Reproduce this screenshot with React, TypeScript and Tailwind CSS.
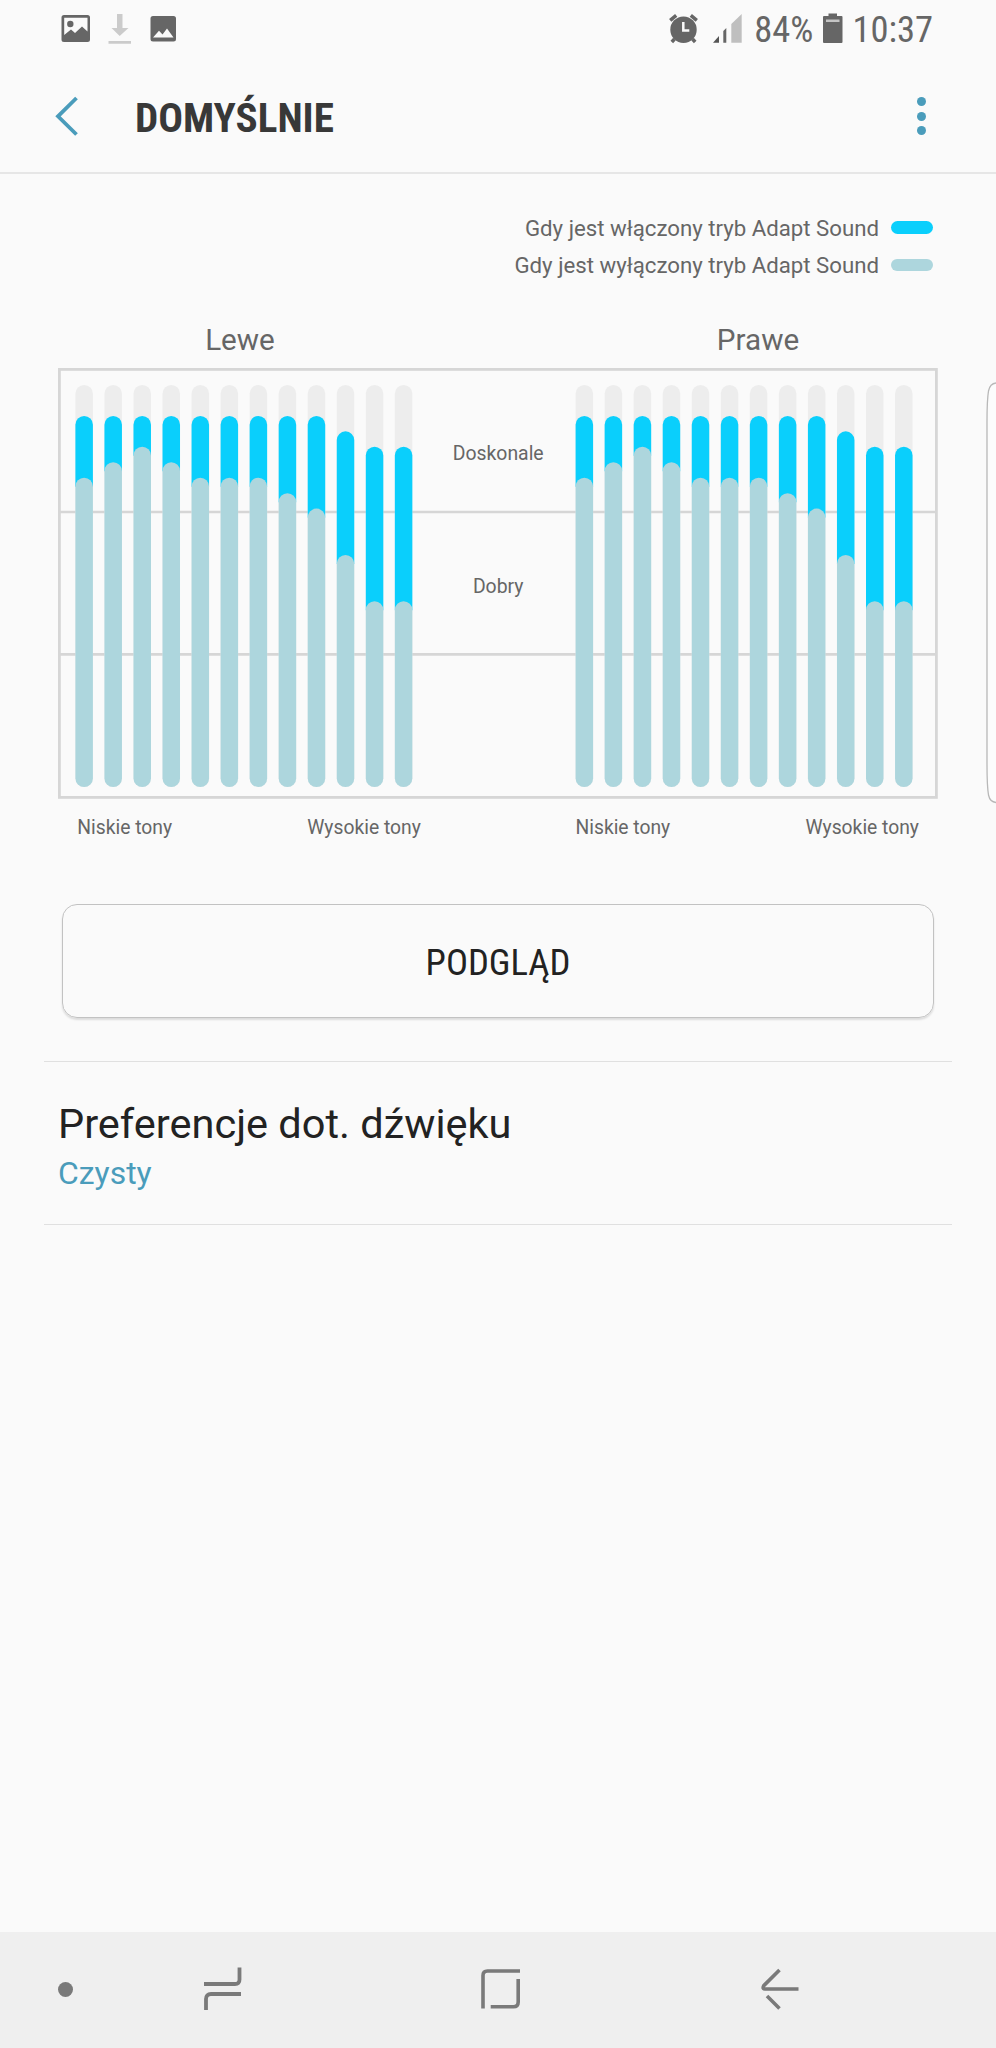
const ADAPTED = [2, 2, 2, 2, 2, 2, 2, 2, 2, 3, 4, 4];
const ORIGINAL = [6, 5, 4, 5, 6, 6, 6, 7, 8, 11, 14, 14];

const BAR_WIDTH = 17.5;
const BAR_PITCH = 29.04;
const BAR_TOP = 17;
const BAR_BOTTOM = 419;
const STEP = 15.45;

function Bars({ x }: { x: number }) {
  const bar = (i: number, level: number, fill: string) => (
    <rect
      x={x + i * BAR_PITCH}
      y={BAR_TOP + level * STEP}
      width={BAR_WIDTH}
      height={BAR_BOTTOM - BAR_TOP - level * STEP}
      rx={BAR_WIDTH / 2}
      fill={fill}
    />
  );
  return (
    <g>
      {ADAPTED.map((level, i) => (
        <g key={i}>
          {bar(i, 0, "#ededed")}
          <path
            d={`M${x + i * BAR_PITCH} ${BAR_TOP + level * STEP + 8.75}a8.75 8.75 0 0 1 17.5 0V${BAR_TOP + ORIGINAL[i] * STEP + 9}h-17.5z`}
            fill="#0acffc"
          />
          {bar(i, ORIGINAL[i], "#add6dd")}
        </g>
      ))}
    </g>
  );
}

function Chart() {
  return (
    <svg width="880" height="431" viewBox="0 0 880 431" className="block">
      <rect x="1.4" y="1.4" width="877" height="428" fill="none" stroke="#d6d6d6" strokeWidth="2.8" />
      <path d="M2 144H878M2 286.4H878" stroke="#d6d6d6" strokeWidth="2.7" />
      <Bars x={17.4} />
      <Bars x={517.6} />
      <g fill="#666" fontSize="19.4" textAnchor="middle" className="font-['Roboto',sans-serif]">
        <text x="440.2" y="91.5">Doskonale</text>
        <text x="440.2" y="225">Dobry</text>
      </g>
    </svg>
  );
}

function StatusBar() {
  return (
    <div className="flex h-[58px] items-start justify-between pr-[63px] pl-[61px] text-[36.5px] leading-[59px] text-[#666]">
      <svg width="116" height="58" viewBox="0 0 116 58">
        <path
          fill="#666"
          fillRule="evenodd"
          d="M3 15h23.500a2.500 2.500 0 0 1 2.500 2.500V39.500a2.500 2.500 0 0 1-2.500 2.500H3a2.500 2.500 0 0 1-2.500-2.500V17.500A2.500 2.500 0 0 1 3 15zM3.200 17.800V35l6.800-5.500 4 3.500 7-6.500 5.500 5V17.800z"
        />
        <circle cx="9.300" cy="24" r="3.200" fill="#666" />
        <path fill="#cbcbcb" d="M56 14h5.500v14h6L58.700 36 50.500 28H56zM47.500 41h22.500v2.700H47.500z" />
        <path
          fill="#666"
          fillRule="evenodd"
          d="M92 16h20.500a2.500 2.500 0 0 1 2.500 2.500V39a2.500 2.500 0 0 1-2.500 2.500H92a2.500 2.500 0 0 1-2.500-2.500V18.500A2.500 2.500 0 0 1 92 16zM92 37.500h20.500L106 28.500l-4.500 6-3.500-3.700z"
        />
      </svg>
      <div className="flex font-['Roboto_Condensed','Roboto',sans-serif]">
        <svg width="84" height="58" viewBox="0 0 84 58" className="mr-[1px]">
          <g>
            <circle cx="14.500" cy="29.700" r="13.200" fill="#666" />
            <path d="M1.200 20.300 7.200 15.300M21.800 15.300l6 5" stroke="#666" strokeWidth="3.500" fill="none" />
            <path d="M5.500 39 2.800 42M23.500 39l2.700 3" stroke="#666" strokeWidth="3.500" fill="none" />
            <path d="M14.300 22v8.500h6" stroke="#fafafa" strokeWidth="2.500" fill="none" />
          </g>
          <path d="M44 42.700h6V36z" fill="#555" />
          <path d="M54.300 42.700V31l3-3v14.700z" fill="#666" />
          <path d="M62.300 42.700V24L72.700 14v28.700z" fill="#bfbfbf" />
        </svg>
        <span>84%</span>
        <svg width="20" height="58" viewBox="0 0 20 58" className="mr-[9px] ml-[10px]">
          <path
            d="M5.500 13.500h8.500V16h4.500a1 1 0 0 1 1 1v25a1 1 0 0 1-1 1H1a1 1 0 0 1-1-1V17a1 1 0 0 1 1-1h4.500z"
            fill="#666"
          />
          <path d="M3 19.500h13.500v2.500H3z" fill="#c4c4c4" />
        </svg>
        <span>10:37</span>
      </div>
    </div>
  );
}

function Header() {
  return (
    <header className="flex h-[116px] items-center border-b-2 border-[#e6e6e6] pt-[2px] pr-[70px] pl-[54px]">
      <svg width="26" height="40" viewBox="0 0 26 40" className="shrink-0">
        <path d="M22.500 2 4 20.300 22.500 38.500" fill="none" stroke="#4a9cbb" strokeWidth="3.800" />
      </svg>
      <h1 className="ml-[55px] pt-[4px] font-['Roboto_Condensed','Roboto',sans-serif] text-[41.1px] leading-[48px] font-bold text-[#383838]">
        DOMYŚLNIE
      </h1>
      <div className="ml-auto flex flex-col gap-[5.800px]">
        <span className="size-[9px] rounded-full bg-[#4a9cbb]" />
        <span className="size-[9px] rounded-full bg-[#4a9cbb]" />
        <span className="size-[9px] rounded-full bg-[#4a9cbb]" />
      </div>
    </header>
  );
}

function Legend() {
  return (
    <div className="flex flex-col items-end pt-[36px] pr-[63px] text-[22.22px] leading-[37px] text-[#666]">
      <div className="flex items-center">
        Gdy jest włączony tryb Adapt Sound
        <span className="mb-[2px] ml-[12px] h-[13px] w-[42px] rounded-full bg-[#0acffc]" />
      </div>
      <div className="flex items-center">
        Gdy jest wyłączony tryb Adapt Sound
        <span className="mb-[1px] ml-[12px] h-[12.500px] w-[42px] rounded-full bg-[#add6dd]" />
      </div>
    </div>
  );
}

function NavBar() {
  return (
    <nav className="flex h-[116px] items-center bg-[#efefef] pb-[2px]">
      <span className="ml-[58px] size-[15px] rounded-full bg-[#7a7a7a]" />
      <svg width="38" height="44" viewBox="0 0 38 44" className="ml-[131px]" fill="none" stroke="#7a7a7a" strokeWidth="3.800">
        <path d="M0 17H31q4.500 0 4.500-4.500V.500M37 27H7q-5 0-5 5V43" />
      </svg>
      <svg width="40" height="40" viewBox="0 0 40 40" className="ml-[239px]" fill="none" stroke="#7a7a7a" strokeWidth="3.600">
        <path d="M2 39.500V6.500q0-4.500 4.500-4.500H39M37.200 10V33q0 4.800-4.800 4.800H9.700" />
      </svg>
      <svg width="38" height="42" viewBox="0 0 38 42" className="ml-[240px]" fill="none" stroke="#7a7a7a" strokeWidth="3.600">
        <path d="M18.500 2 2.800 17.600Q1 21 4 21H37.500M6 28 18.500 40.500" strokeLinejoin="round" />
      </svg>
    </nav>
  );
}

export default function App() {
  return (
    <div className="relative flex h-[2048px] w-[996px] flex-col overflow-hidden bg-[#fafafa] font-['Roboto',sans-serif]">
      <StatusBar />
      <Header />
      <main className="flex-1">
        <Legend />
        <div className="flex h-[84px] pt-[38px] pl-[58px] text-[29.65px] leading-[35px] text-[#666]">
          <div className="w-[364px] text-center">Lewe</div>
          <div className="ml-[154px] w-[364px] text-center">Prawe</div>
        </div>
        <div className="pl-[58px]">
          <Chart />
        </div>
        <div className="flex pt-[14px] pl-[77.300px] text-[19.3px] leading-[29px] text-[#666]">
          <div className="flex w-[343.500px] justify-between">
            <span>Niskie tony</span>
            <span>Wysokie tony</span>
          </div>
          <div className="ml-[154.700px] flex w-[343.500px] justify-between">
            <span>Niskie tony</span>
            <span>Wysokie tony</span>
          </div>
        </div>
        <button className="mt-[62px] ml-[62px] flex h-[114px] w-[872px] items-center justify-center rounded-[15px] border-[1.500px] border-[#c2c2c2] pt-[4px] font-['Roboto_Condensed','Roboto',sans-serif] text-[36.7px] leading-[44px] text-[#222] shadow-[0_2px_2px_rgba(0,0,0,0.12)]">
          PODGLĄD
        </button>
        <section className="mx-[44px] mt-[43px] h-[164px] border-y border-[#e0e0e0] px-[14px] pt-[36px]">
          <div className="text-[41.5px] leading-[52px] text-[#222]">Preferencje dot. dźwięku</div>
          <div className="text-[31.9px] leading-[46px] text-[#4a9cbb]">Czysty</div>
        </section>
      </main>
      <NavBar />
      <svg width="10" height="422" viewBox="0 0 10 422" className="absolute top-[382px] right-0">
        <path d="M10 1Q4 1.500 2.500 9Q1 18 1 40V382Q1 404 2.500 413Q4 420 10 420.500" fill="#fcfcfc" stroke="#b8b8b8" strokeWidth="1.300" />
      </svg>
    </div>
  );
}
